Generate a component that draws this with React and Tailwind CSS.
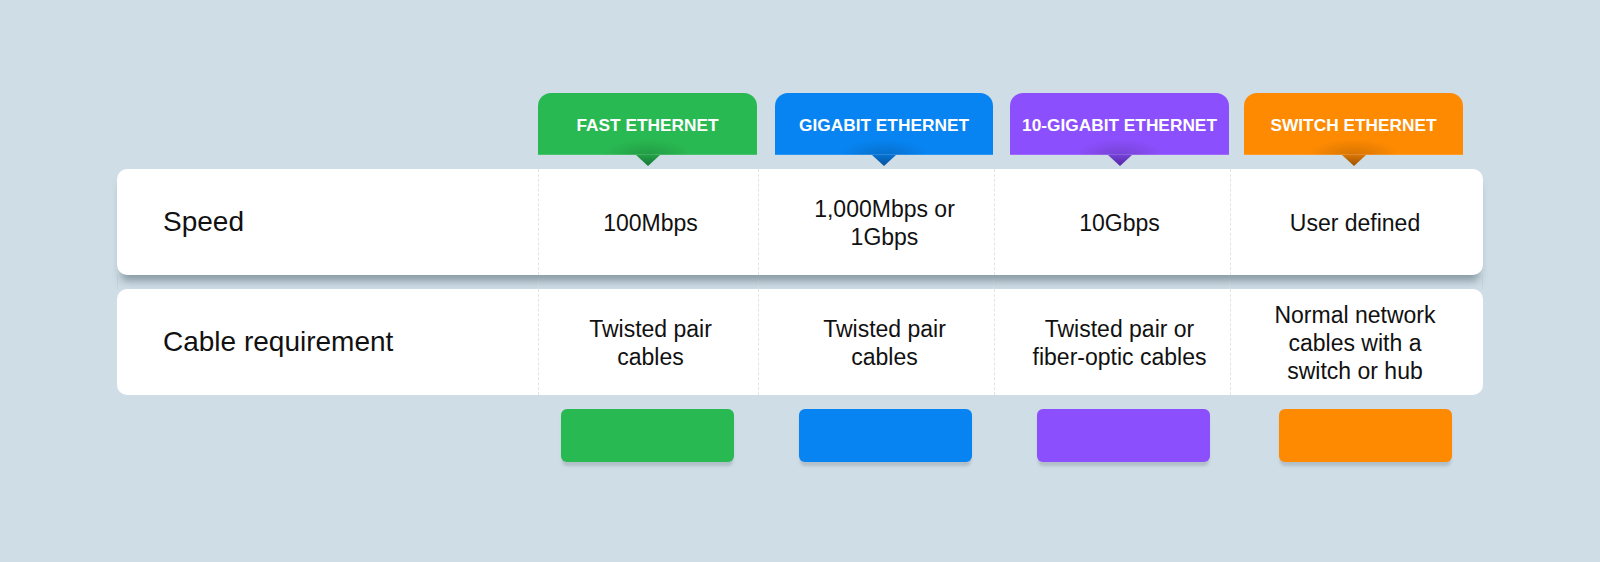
import React from "react";

const tabs = [
  { label: "FAST ETHERNET", bg: "bg-[#29b952]", ml: "ml-[421px]", w: "w-[219px]", a1: "#23a046", a2: "#17773a" },
  { label: "GIGABIT ETHERNET", bg: "bg-[#0784f2]", ml: "ml-[18px]", w: "w-[218px]", a1: "#0672d2", a2: "#07509a" },
  { label: "10-GIGABIT ETHERNET", bg: "bg-[#8c4ffd]", ml: "ml-[17px]", w: "w-[219px]", a1: "#7440d8", a2: "#52289e" },
  { label: "SWITCH ETHERNET", bg: "bg-[#fe8a02]", ml: "ml-[15px]", w: "w-[219px]", a1: "#d97504", a2: "#9a5206" },
];

const cellCls = [
  "w-[220px] pl-[4px]",
  "w-[236px] pl-[16px]",
  "w-[236px] pl-[14px]",
  "w-[253px] pr-[4px]",
];

const rows = [
  { label: "Speed", cells: [["100Mbps"], ["1,000Mbps or", "1Gbps"], ["10Gbps"], ["User defined"]] },
  {
    label: "Cable requirement",
    cells: [
      ["Twisted pair", "cables"],
      ["Twisted pair", "cables"],
      ["Twisted pair or", "fiber-optic cables"],
      ["Normal network", "cables with a", "switch or hub"],
    ],
  },
];

const bars = [
  { bg: "bg-[#29b952]", ml: "ml-[444px]" },
  { bg: "bg-[#0784f2]", ml: "ml-[65px]" },
  { bg: "bg-[#8c4ffd]", ml: "ml-[65px]" },
  { bg: "bg-[#fe8a02]", ml: "ml-[69px]" },
];

function Row({ row, shadow }) {
  return (
    <div
      className={`relative z-10 flex h-[106px] w-[1366px] rounded-[10px] bg-white ${
        shadow ? "shadow-[0_10px_8px_-4px_rgba(80,100,112,0.55)]" : ""
      }`}
    >
      <div className="flex w-[421px] items-center pl-[46px] text-[28px] text-[#111]">{row.label}</div>
      {row.cells.map((lines, i) => (
        <div
          key={i}
          className={`flex items-center justify-center border-l border-dashed border-[#e4e4e4] ${cellCls[i]}`}
        >
          <div className="whitespace-nowrap pt-[2px] text-center text-[23px] leading-[28px] text-[#111]">
            {lines.map((l, j) => (
              <div key={j}>{l}</div>
            ))}
          </div>
        </div>
      ))}
    </div>
  );
}

export default function App() {
  return (
    <div
      className="h-[562px] w-[1600px] overflow-hidden bg-[#cfdde6] pl-[117px] pt-[93px]"
      style={{ fontFamily: '"Liberation Sans", Arial, sans-serif' }}
    >
      <div className="flex">
        {tabs.map((t, i) => (
          <div
            key={i}
            className={`relative flex h-[62px] items-center justify-center rounded-t-[13px] pt-[3px] ${t.bg} ${t.ml} ${t.w} bg-[radial-gradient(ellipse_45px_16px_at_50%_100%,rgba(0,0,0,0.16),transparent)]`}
          >
            <span className="whitespace-nowrap text-[17.3px] font-bold text-white">{t.label}</span>
            <div className="absolute inset-x-0 bottom-0 h-px bg-white/15" />
            <svg
              className="absolute left-1/2 top-full -translate-x-1/2"
              width="24"
              height="11"
              viewBox="0 0 24 11"
            >
              <defs>
                <linearGradient id={`ag${i}`} x1="0" y1="0" x2="0" y2="1">
                  <stop offset="0" stopColor={t.a1} />
                  <stop offset="1" stopColor={t.a2} />
                </linearGradient>
              </defs>
              <polygon points="0,0 24,0 12,11" fill={`url(#ag${i})`} />
            </svg>
          </div>
        ))}
      </div>

      <div className="mt-[14px]">
        <Row row={rows[0]} shadow />
        <div className="flex h-[14px] w-[1366px] border-x border-[#c5d3dc]">
          <div className="w-[420px]" />
          {cellCls.map((c, i) => (
            <div key={i} className={`border-l border-dashed border-[#dde3e7] ${c.split(" ")[0]}`} />
          ))}
        </div>
        <Row row={rows[1]} />
      </div>

      <div className="mt-[14px] flex">
        {bars.map((b, i) => (
          <div
            key={i}
            className={`h-[53px] w-[173px] rounded-[6px] ${b.bg} ${b.ml} shadow-[0_5px_3px_-1px_rgba(120,135,145,0.35)]`}
          />
        ))}
      </div>
    </div>
  );
}
